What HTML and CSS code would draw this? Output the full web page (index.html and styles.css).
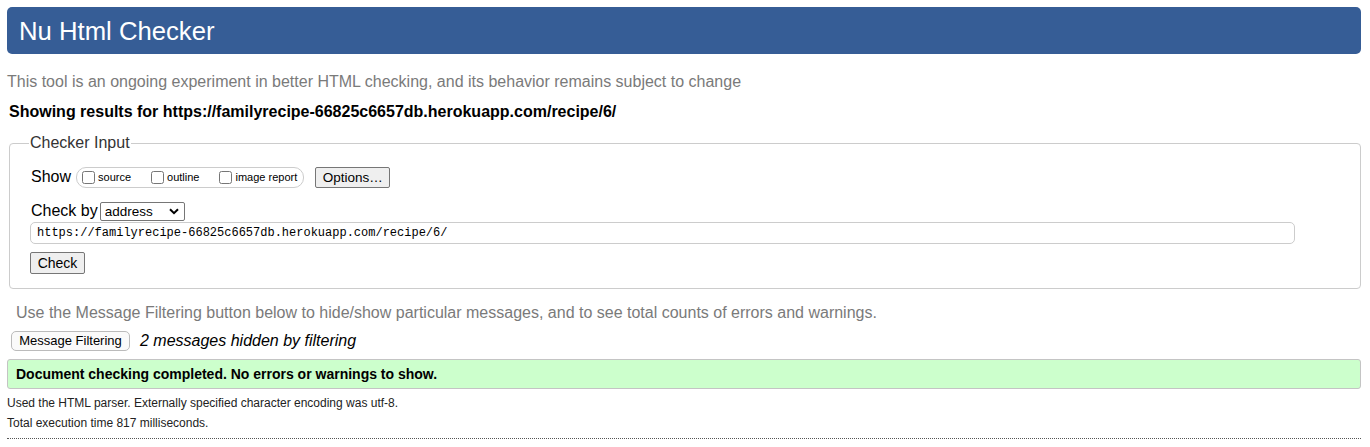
FILE: index.html
```html
<!DOCTYPE html>
<html>
<head>
<meta charset="utf-8">
<title>Nu Html Checker</title>
<link rel="stylesheet" href="styles.css">
</head>
<body>
<header class="banner"><h1 class="title">Nu Html Checker</h1></header>
<p class="intro">This tool is an ongoing experiment in better HTML checking, and its behavior remains subject to change</p>
<p class="showing">Showing results for https://familyrecipe-66825c6657db.herokuapp.com/recipe/6/</p>
<fieldset class="checker">
  <legend class="legend">Checker Input</legend>
  <div class="row show-row">
    <span class="lbl">Show</span>
    <span class="pill">
      <label class="opt"><input type="checkbox" class="cb"><span>source</span></label>
      <label class="opt"><input type="checkbox" class="cb"><span>outline</span></label>
      <label class="opt"><input type="checkbox" class="cb"><span>image report</span></label>
    </span>
    <button class="btn options">Options…</button>
  </div>
  <div class="row by-row">
    <span class="lbl">Check by</span>
    <span class="sel-wrap">
      <select class="sel"><option>address</option></select>
      <svg class="chev" width="10" height="7" viewBox="0 0 10 7"><path d="M1 1.2 L5 5.2 L9 1.2" fill="none" stroke="#000" stroke-width="2"/></svg>
    </span>
  </div>
  <input class="url" type="text" value="https://familyrecipe-66825c6657db.herokuapp.com/recipe/6/">
  <div class="row check-row"><button class="btn check">Check</button></div>
</fieldset>
<p class="filter-note">Use the Message Filtering button below to hide/show particular messages, and to see total counts of errors and warnings.</p>
<div class="filter-row">
  <button class="btn filter">Message Filtering</button>
  <em class="hidden-count">2 messages hidden by filtering</em>
</div>
<div class="success">Document checking completed. No errors or warnings to show.</div>
<p class="meta">Used the HTML parser. Externally specified character encoding was utf-8.</p>
<p class="meta">Total execution time 817 milliseconds.</p>
<hr class="dots">
</body>
</html>
```
FILE: styles.css
```css
html, body { margin: 0; padding: 0; background: #fff; }
body {
  font-family: "Liberation Sans", Arial, sans-serif;
  font-size: 16px;
  color: #000;
  padding: 7px 9px 0 7px;
}
.banner {
  background: #365d96;
  border-radius: 5px;
  height: 47px;
  display: flex;
  align-items: center;
}
.title {
  margin: 0;
  padding-left: 12px;
  font-size: 25.7px;
  font-weight: normal;
  color: #fff;
  line-height: 30px;
}
.intro {
  margin: 18px 0 0 0;
  color: #7a7a7a;
  line-height: 20px;
}
.showing {
  margin: 10px 0 0 2px;
  font-weight: bold;
  line-height: 20px;
}
.checker {
  margin: 12px 0 0 2px;
  border: 1px solid #ccc;
  border-radius: 4px;
  padding: 6px 20px 14px 21px;
}
.legend {
  padding: 0 1px;
  margin-left: -2px;
  color: #333;
  line-height: 18px;
}
.row { display: flex; align-items: center; }
.show-row { margin-top: 8px; height: 22px; }
.lbl { line-height: 20px; margin-right: 5px; }
.pill {
  display: inline-flex;
  align-items: center;
  border: 1px solid #ccc;
  border-radius: 10px;
  height: 19px;
  padding: 0 6px 0 5px;
  font-size: 11px;
}
.opt { display: inline-flex; align-items: center; margin-right: 20px; }
.opt:last-child { margin-right: 0; }
.cb { margin: 0 3px 0 0; width: 13px; height: 13px; }
.btn {
  font-family: "Liberation Sans", Arial, sans-serif;
  font-size: 13.5px;
  color: #000;
  background: #efefef;
  border: 1px solid #767676;
  border-radius: 2px;
  padding: 0 6px;
  height: 21px;
  line-height: 19px;
}
.options { margin-left: 11px; width: 75px; }
.by-row { margin-top: 13px; height: 20px; }
.by-row .lbl { margin-right: 2px; }
.sel-wrap { position: relative; display: inline-block; }
.sel {
  -webkit-appearance: none;
  appearance: none;
  width: 85px;
  height: 19px;
  border: 1px solid #767676;
  border-radius: 2px;
  background: #fff;
  font-family: "Liberation Sans", Arial, sans-serif;
  font-size: 13.5px;
  padding: 0 0 0 4px;
  color: #000;
  display: block;
}
.chev { position: absolute; right: 6px; top: 6px; pointer-events: none; }
.url {
  display: block;
  box-sizing: border-box;
  margin: 1px 0 0 -1px;
  width: 1265px;
  height: 22px;
  border: 1px solid #ccc;
  border-radius: 5px;
  padding: 0 6px;
  font-family: "Liberation Mono", "Courier New", monospace;
  font-size: 12px;
  color: #000;
}
.check-row { margin-top: 8px; margin-left: -1px; }
.check { height: 22px; width: 55px; font-size: 14px; }
.filter-note {
  margin: 14px 0 0 9px;
  color: #7a7a7a;
  line-height: 20px;
}
.filter-row { display: flex; align-items: center; margin: 8px 0 0 4px; }
.filter {
  background: #fafafa;
  border: 1px solid #bbb;
  border-radius: 5px;
  height: 20px;
  width: 119px;
  font-size: 13px;
  padding: 0;
  line-height: 18px;
}
.hidden-count { margin-left: 10px; line-height: 20px; }
.success {
  margin-top: 8px;
  background: #ccffcc;
  border: 1px solid #c4c4c4;
  border-radius: 3px;
  height: 28px;
  line-height: 28px;
  padding-left: 8px;
  font-weight: bold;
  font-size: 14px;
}
.meta { margin: 0; font-size: 12px; line-height: 20px; color: #222; }
.success + .meta { margin-top: 4px; }
.dots {
  margin: 5px 0 0 0;
  border: 0;
  border-top: 1px dotted #555;
  height: 0;
}
```
